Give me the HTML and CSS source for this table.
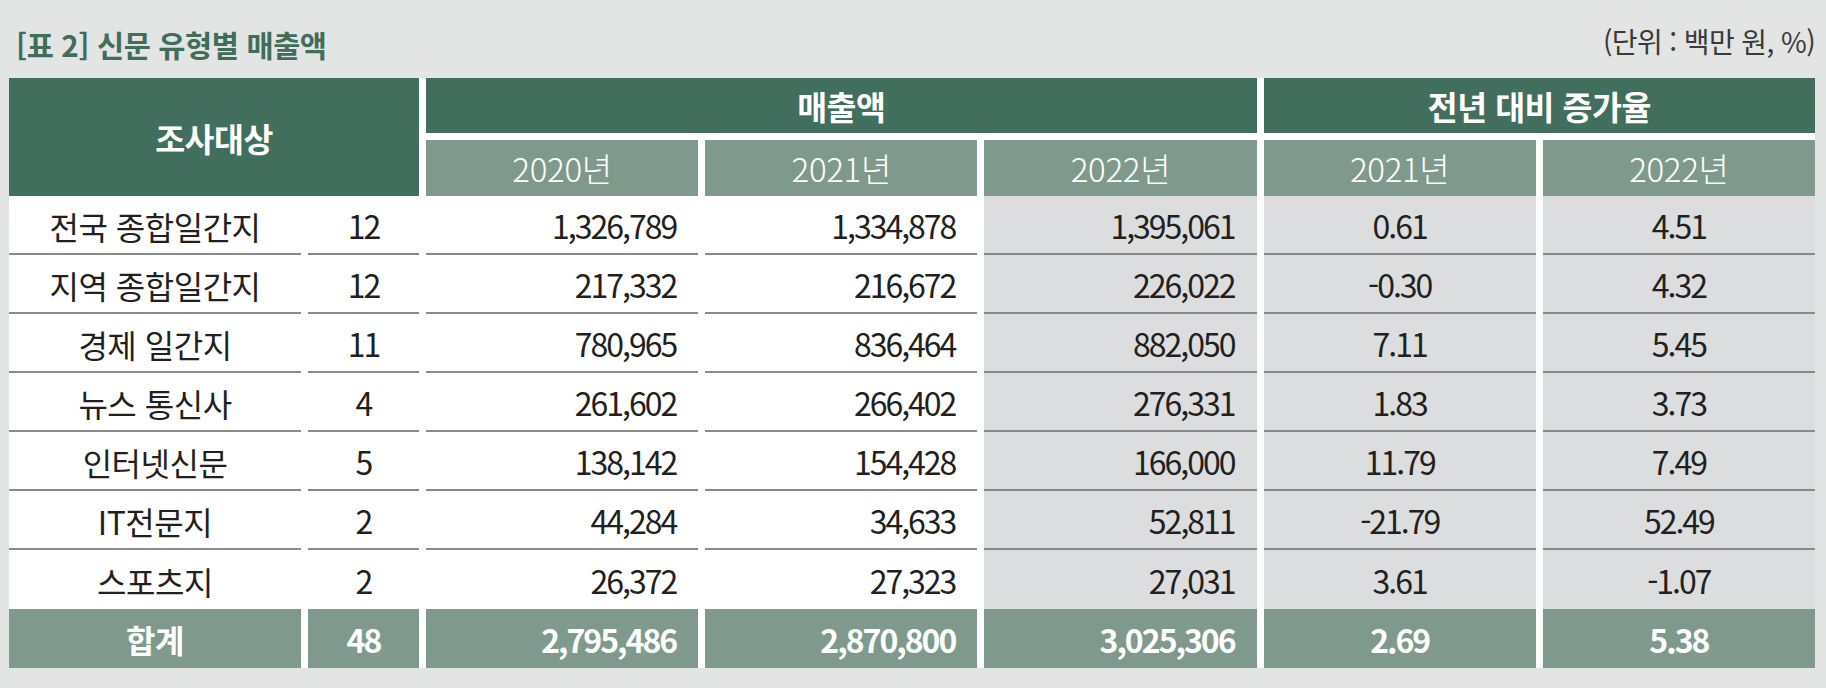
FILE: index.html
```html
<!DOCTYPE html>
<html lang="ko">
<head>
<meta charset="utf-8">
<title>신문 유형별 매출액</title>
<link rel="stylesheet" href="styles.css">
</head>
<body>
<div class="page">
  <div class="caption">
    <h1 class="title">[표 2] 신문 유형별 매출액</h1>
    <div class="unit">(단위 : 백만 원, %)</div>
  </div>
  <div class="table">
    <div class="h1 subject">조사대상</div>
    <div class="h1 sales">매출액</div>
    <div class="h1 growth">전년 대비 증가율</div>
    <div class="spacer"></div>
    <div class="h2">2020년</div>
    <div class="h2">2021년</div>
    <div class="h2">2022년</div>
    <div class="h2">2021년</div>
    <div class="h2">2022년</div>

    <div class="c name">전국 종합일간지</div><div class="c cnt">12</div><div class="c num">1,326,789</div><div class="c num">1,334,878</div><div class="c num g">1,395,061</div><div class="c rate g">0.61</div><div class="c rate g">4.51</div>
    <div class="c name">지역 종합일간지</div><div class="c cnt">12</div><div class="c num">217,332</div><div class="c num">216,672</div><div class="c num g">226,022</div><div class="c rate g">-0.30</div><div class="c rate g">4.32</div>
    <div class="c name">경제 일간지</div><div class="c cnt">11</div><div class="c num">780,965</div><div class="c num">836,464</div><div class="c num g">882,050</div><div class="c rate g">7.11</div><div class="c rate g">5.45</div>
    <div class="c name">뉴스 통신사</div><div class="c cnt">4</div><div class="c num">261,602</div><div class="c num">266,402</div><div class="c num g">276,331</div><div class="c rate g">1.83</div><div class="c rate g">3.73</div>
    <div class="c name">인터넷신문</div><div class="c cnt">5</div><div class="c num">138,142</div><div class="c num">154,428</div><div class="c num g">166,000</div><div class="c rate g">11.79</div><div class="c rate g">7.49</div>
    <div class="c name">IT전문지</div><div class="c cnt">2</div><div class="c num">44,284</div><div class="c num">34,633</div><div class="c num g">52,811</div><div class="c rate g">-21.79</div><div class="c rate g">52.49</div>
    <div class="c name last">스포츠지</div><div class="c cnt last">2</div><div class="c num last">26,372</div><div class="c num last">27,323</div><div class="c num g last">27,031</div><div class="c rate g last">3.61</div><div class="c rate g last">-1.07</div>

    <div class="t name">합계</div><div class="t cnt">48</div><div class="t num">2,795,486</div><div class="t num">2,870,800</div><div class="t num">3,025,306</div><div class="t rate">2.69</div><div class="t rate">5.38</div>
  </div>
</div>
</body>
</html>
```
FILE: styles.css
```css
html, body {
  margin: 0;
  padding: 0;
  background: #e3e5e4;
}
body {
  font-family: "Noto Sans CJK KR", "Noto Sans", sans-serif;
  color: #231f20;
}
.page {
  width: 1826px;
  height: 688px;
  box-sizing: border-box;
  padding: 0 11px 0 9px;
}
.caption {
  display: flex;
  justify-content: space-between;
  align-items: flex-end;
  height: 78px;
  box-sizing: border-box;
  padding: 0 0 15px 7px;
}
.title {
  margin: 0;
  font-size: 29.5px;
  line-height: 38px;
  font-weight: 700;
  color: #416d5b;
  letter-spacing: -0.4px;
}
.unit {
  font-size: 28px;
  line-height: 38px;
  font-weight: 400;
  color: #3a3a3a;
  letter-spacing: -0.6px;
  padding-bottom: 3px;
}
.table {
  display: grid;
  grid-template-columns: 292px 111px repeat(5, 1fr);
  grid-template-rows: 55px 7px 56px repeat(8, 59px);
  column-gap: 7px;
  background: #ffffff;
}
.h1 {
  background: #426f5d;
  color: #ffffff;
  font-size: 32.5px;
  font-weight: 700;
  display: flex;
  align-items: center;
  justify-content: center;
  letter-spacing: -0.5px;
}
.subject {
  grid-column: 1 / 3;
  grid-row: 1 / 4;
}
.sales {
  grid-column: 3 / 6;
  grid-row: 1;
}
.growth {
  grid-column: 6 / 8;
  grid-row: 1;
}
.spacer {
  grid-column: 3 / 8;
  grid-row: 2;
}
.h2 {
  background: #7f9a8c;
  color: #ffffff;
  font-size: 33px;
  font-weight: 300;
  display: flex;
  align-items: center;
  justify-content: center;
  letter-spacing: -0.3px;
}
.c, .t {
  display: flex;
  align-items: center;
  font-size: 32px;
  font-weight: 400;
  box-sizing: border-box;
}
.c {
  border-bottom: 2px solid #8a8a8a;
  background: #ffffff;
}
.c.last {
  border-bottom: none;
}
.c.g {
  background: #dcdddf;
}
.t {
  background: #7f9a8c;
  color: #ffffff;
  font-weight: 700;
}
.name, .cnt, .rate {
  justify-content: center;
}
.name {
  letter-spacing: -0.5px;
}
.cnt, .num, .rate {
  letter-spacing: -2px;
}
.num {
  justify-content: flex-end;
  padding-right: 22px;
}
.c.name {
  padding-top: 2px;
}
```
